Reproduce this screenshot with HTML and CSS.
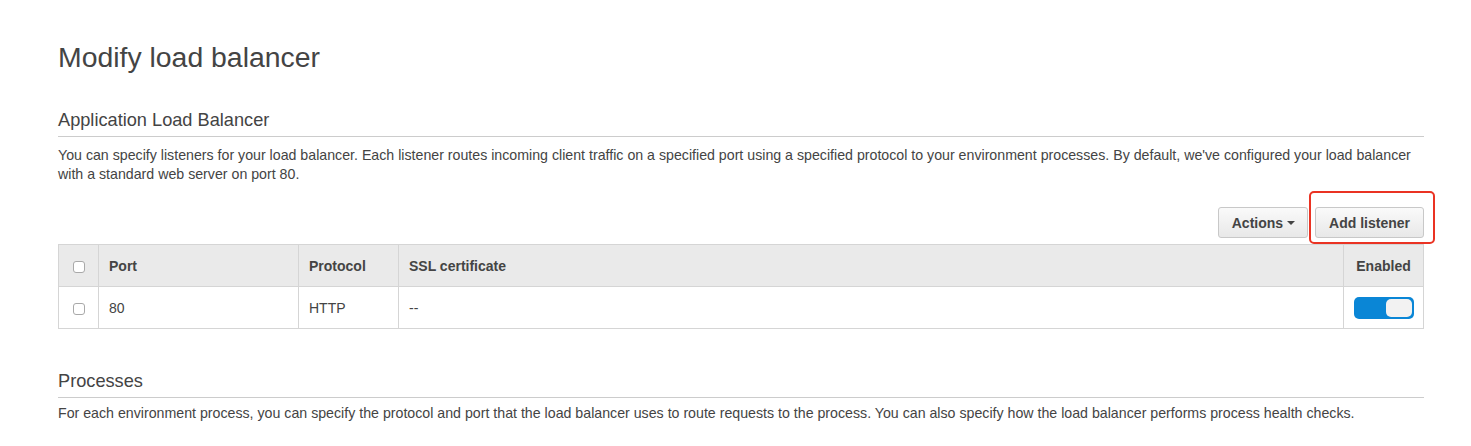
FILE: index.html
```html
<!DOCTYPE html>
<html>
<head>
<meta charset="utf-8">
<link rel="stylesheet" href="styles.css">
</head>
<body>
<div class="page">
  <h1 class="title">Modify load balancer</h1>

  <section class="section">
    <h2 class="section-title">Application Load Balancer</h2>
    <p class="desc">You can specify listeners for your load balancer. Each listener routes incoming client traffic on a specified port using a specified protocol to your environment processes. By default, we've configured your load balancer with a standard web server on port 80.</p>

    <div class="toolbar">
      <button class="btn btn-actions">Actions <span class="caret"></span></button>
      <button class="btn btn-highlight">Add listener</button>
    </div>

    <table class="grid">
      <thead>
        <tr>
          <th class="col-check"><span class="checkbox"></span></th>
          <th class="col-port">Port</th>
          <th class="col-proto">Protocol</th>
          <th class="col-ssl">SSL certificate</th>
          <th class="col-enabled">Enabled</th>
        </tr>
      </thead>
      <tbody>
        <tr>
          <td class="col-check"><span class="checkbox"></span></td>
          <td>80</td>
          <td>HTTP</td>
          <td>--</td>
          <td class="col-enabled"><span class="toggle"><span class="knob"></span></span></td>
        </tr>
      </tbody>
    </table>
  </section>

  <section class="section section-processes">
    <h2 class="section-title">Processes</h2>
    <p class="desc desc-tight">For each environment process, you can specify the protocol and port that the load balancer uses to route requests to the process. You can also specify how the load balancer performs process health checks.</p>
  </section>
</div>
</body>
</html>
```

FILE: styles.css
```css
* { box-sizing: border-box; }

body {
  margin: 0;
  background: #ffffff;
  font-family: "Liberation Sans", Arial, Helvetica, sans-serif;
  color: #444444;
}

.page {
  padding: 41px 47px 0 58px;
}

.title {
  margin: 0;
  font-size: 28.4px;
  font-weight: normal;
  line-height: 32px;
  color: #444444;
}

.section {
  margin-top: 36px;
}

.section-title {
  margin: 0;
  font-size: 18.2px;
  font-weight: normal;
  line-height: 22px;
  color: #444444;
  padding-bottom: 5px;
  border-bottom: 1px solid #cccccc;
}

.desc {
  margin: 9px 0 0 0;
  font-size: 14.2px;
  line-height: 19px;
  color: #444444;
}

.desc-tight {
  margin-top: 6px;
}

.toolbar {
  display: flex;
  justify-content: flex-end;
  gap: 7px;
  margin-top: 23px;
}

.btn {
  position: relative;
  height: 31px;
  padding: 0 13px;
  border: 1px solid #c8c8c8;
  border-radius: 3px;
  background: linear-gradient(#fafafa, #e8e8e8);
  font-family: "Liberation Sans", Arial, Helvetica, sans-serif;
  font-size: 14px;
  font-weight: bold;
  color: #444444;
  display: inline-flex;
  align-items: center;
  gap: 4px;
}

.btn-actions {
  padding: 0 12px 0 13px;
}

.caret {
  display: inline-block;
  width: 0;
  height: 0;
  border-left: 4px solid transparent;
  border-right: 4px solid transparent;
  border-top: 4px solid #444444;
  margin-top: 1px;
}

.btn-highlight::after {
  content: "";
  position: absolute;
  top: -17px;
  left: -7px;
  right: -12px;
  bottom: -7px;
  border: 2px solid #ea3323;
  border-radius: 5px;
  pointer-events: none;
}

.grid {
  width: 100%;
  margin-top: 6px;
  border-collapse: collapse;
  font-size: 14px;
  color: #444444;
}

.grid th,
.grid td {
  height: 42px;
  border: 1px solid #d5d5d5;
  padding: 0 10px;
  text-align: left;
  vertical-align: middle;
}

.grid th {
  background: #eaeaea;
  font-weight: bold;
}

.grid .col-check {
  width: 40px;
  padding: 0;
  text-align: center;
}

.col-port { width: 200px; }
.col-proto { width: 100px; }
.grid .col-enabled { width: 80px; text-align: center; padding: 0; }

.checkbox {
  display: inline-block;
  width: 12px;
  height: 12px;
  border: 1px solid #a9a9a9;
  border-radius: 3px;
  background: #ffffff;
  vertical-align: middle;
}

.toggle {
  display: inline-flex;
  justify-content: flex-end;
  align-items: center;
  width: 60px;
  height: 22px;
  padding: 2px;
  border-radius: 5px;
  background: #0a86d6;
  vertical-align: middle;
}

.knob {
  width: 26px;
  height: 18px;
  border-radius: 5px;
  background: #f2f2f2;
}

.section-processes {
  margin-top: 41px;
}
```
